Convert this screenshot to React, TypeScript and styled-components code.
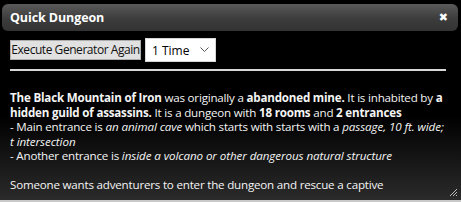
import styled, { createGlobalStyle } from 'styled-components'

const GlobalStyle = createGlobalStyle`
  html, body {
    margin: 0;
    padding: 0;
    background: #000;
  }
`

const Window = styled.div`
  width: 461px;
  height: 202px;
  box-sizing: border-box;
  display: flex;
  flex-direction: column;
  overflow: hidden;
  background: linear-gradient(to bottom, #000 0px, #000 115px, #252525 190px, #2b2b2b 200px);
  border-bottom: 2px solid #c9c9c9;
  font-family: 'Open Sans', 'Noto Sans', sans-serif;
  position: relative;
`

const TitleBar = styled.div`
  margin: 4px 3px 0 2px;
  height: 27px;
  flex: none;
  display: flex;
  align-items: center;
  justify-content: space-between;
  padding: 0 10px 0 8px;
  border-radius: 6px;
  background: linear-gradient(to bottom, #5a5a5a, #3c3c3c 55%, #333 100%);
`

const Title = styled.span`
  color: #fff;
  font-weight: 700;
  font-size: 12.5px;
  letter-spacing: -0.1px;
`

const Close = styled.span`
  color: #fff;
  font-weight: 700;
  font-size: 11px;
  line-height: 1;
  font-family: 'DejaVu Sans', sans-serif;
`

const Body = styled.div`
  padding: 7px 13px 0 10px;
  display: flex;
  flex-direction: column;
`

const Toolbar = styled.div`
  display: flex;
  align-items: center;
  gap: 4px;
`

const Button = styled.button`
  height: 20px;
  width: 131px;
  padding: 0;
  background: #e1e1e1;
  border: 1px solid #adadad;
  border-radius: 0;
  font-family: 'Open Sans', 'Noto Sans', sans-serif;
  font-size: 12px;
  letter-spacing: -0.45px;
  color: #111;
  line-height: 18px;
  white-space: nowrap;
`

const Select = styled.div`
  width: 71px;
  height: 24px;
  box-sizing: border-box;
  background: #fff;
  border: 1px solid #d6d6d6;
  display: flex;
  align-items: center;
  justify-content: space-between;
  padding: 0 6px 0 6px;
  font-size: 12px;
  color: #000;
`

const Rule = styled.hr`
  margin: 7px 0 0 0;
  border: none;
  border-top: 2px solid #d8d8d8;
  height: 0;
  width: 436px;
`

const Text = styled.div`
  margin-top: 20px;
  color: #f4f4f4;
  font-family: 'Open Sans', 'Noto Sans', sans-serif;
  font-size: 11.6px;
  line-height: 14.5px;
  letter-spacing: -0.2px;

  b {
    font-weight: 700;
  }
  i {
    font-style: italic;
    letter-spacing: -0.08px;
  }
`

const Gap = styled.div`
  height: 14px;
`

const Grip = styled.svg`
  position: absolute;
  right: 3px;
  bottom: 3px;
`

export default function App() {
  return (
    <>
      <GlobalStyle />
      <Window>
        <TitleBar>
          <Title>Quick Dungeon</Title>
          <Close>✖</Close>
        </TitleBar>
        <Body>
          <Toolbar>
            <Button>Execute Generator Again</Button>
            <Select>
              <span>1 Time</span>
              <svg width="9" height="6" viewBox="0 0 9 6">
                <path d="M0.5 0.5 L4.5 4.5 L8.5 0.5" fill="none" stroke="#555" strokeWidth="1" />
              </svg>
            </Select>
          </Toolbar>
          <Rule />
          <Text>
            <b>The Black Mountain of Iron</b> was originally a <b>abandoned mine.</b> It is inhabited by{' '}
            <b>a hidden guild of assassins.</b> It is a dungeon with <b>18 rooms</b> and <b>2 entrances</b>
            <br />- Main entrance is <i>an animal cave</i> which starts with starts with a{' '}
            <i>passage, 10 ft. wide; t intersection</i>
            <br />- Another entrance is <i>inside a volcano or other dangerous natural structure</i>
            <Gap />
            Someone wants adventurers to enter the dungeon and rescue a captive
          </Text>
        </Body>
        <Grip width="10" height="10" viewBox="0 0 10 10">
          <path d="M9 2 L2 9 M9 5 L5 9 M9 8 L8 9" stroke="#bbb" strokeWidth="1" />
        </Grip>
      </Window>
    </>
  )
}
